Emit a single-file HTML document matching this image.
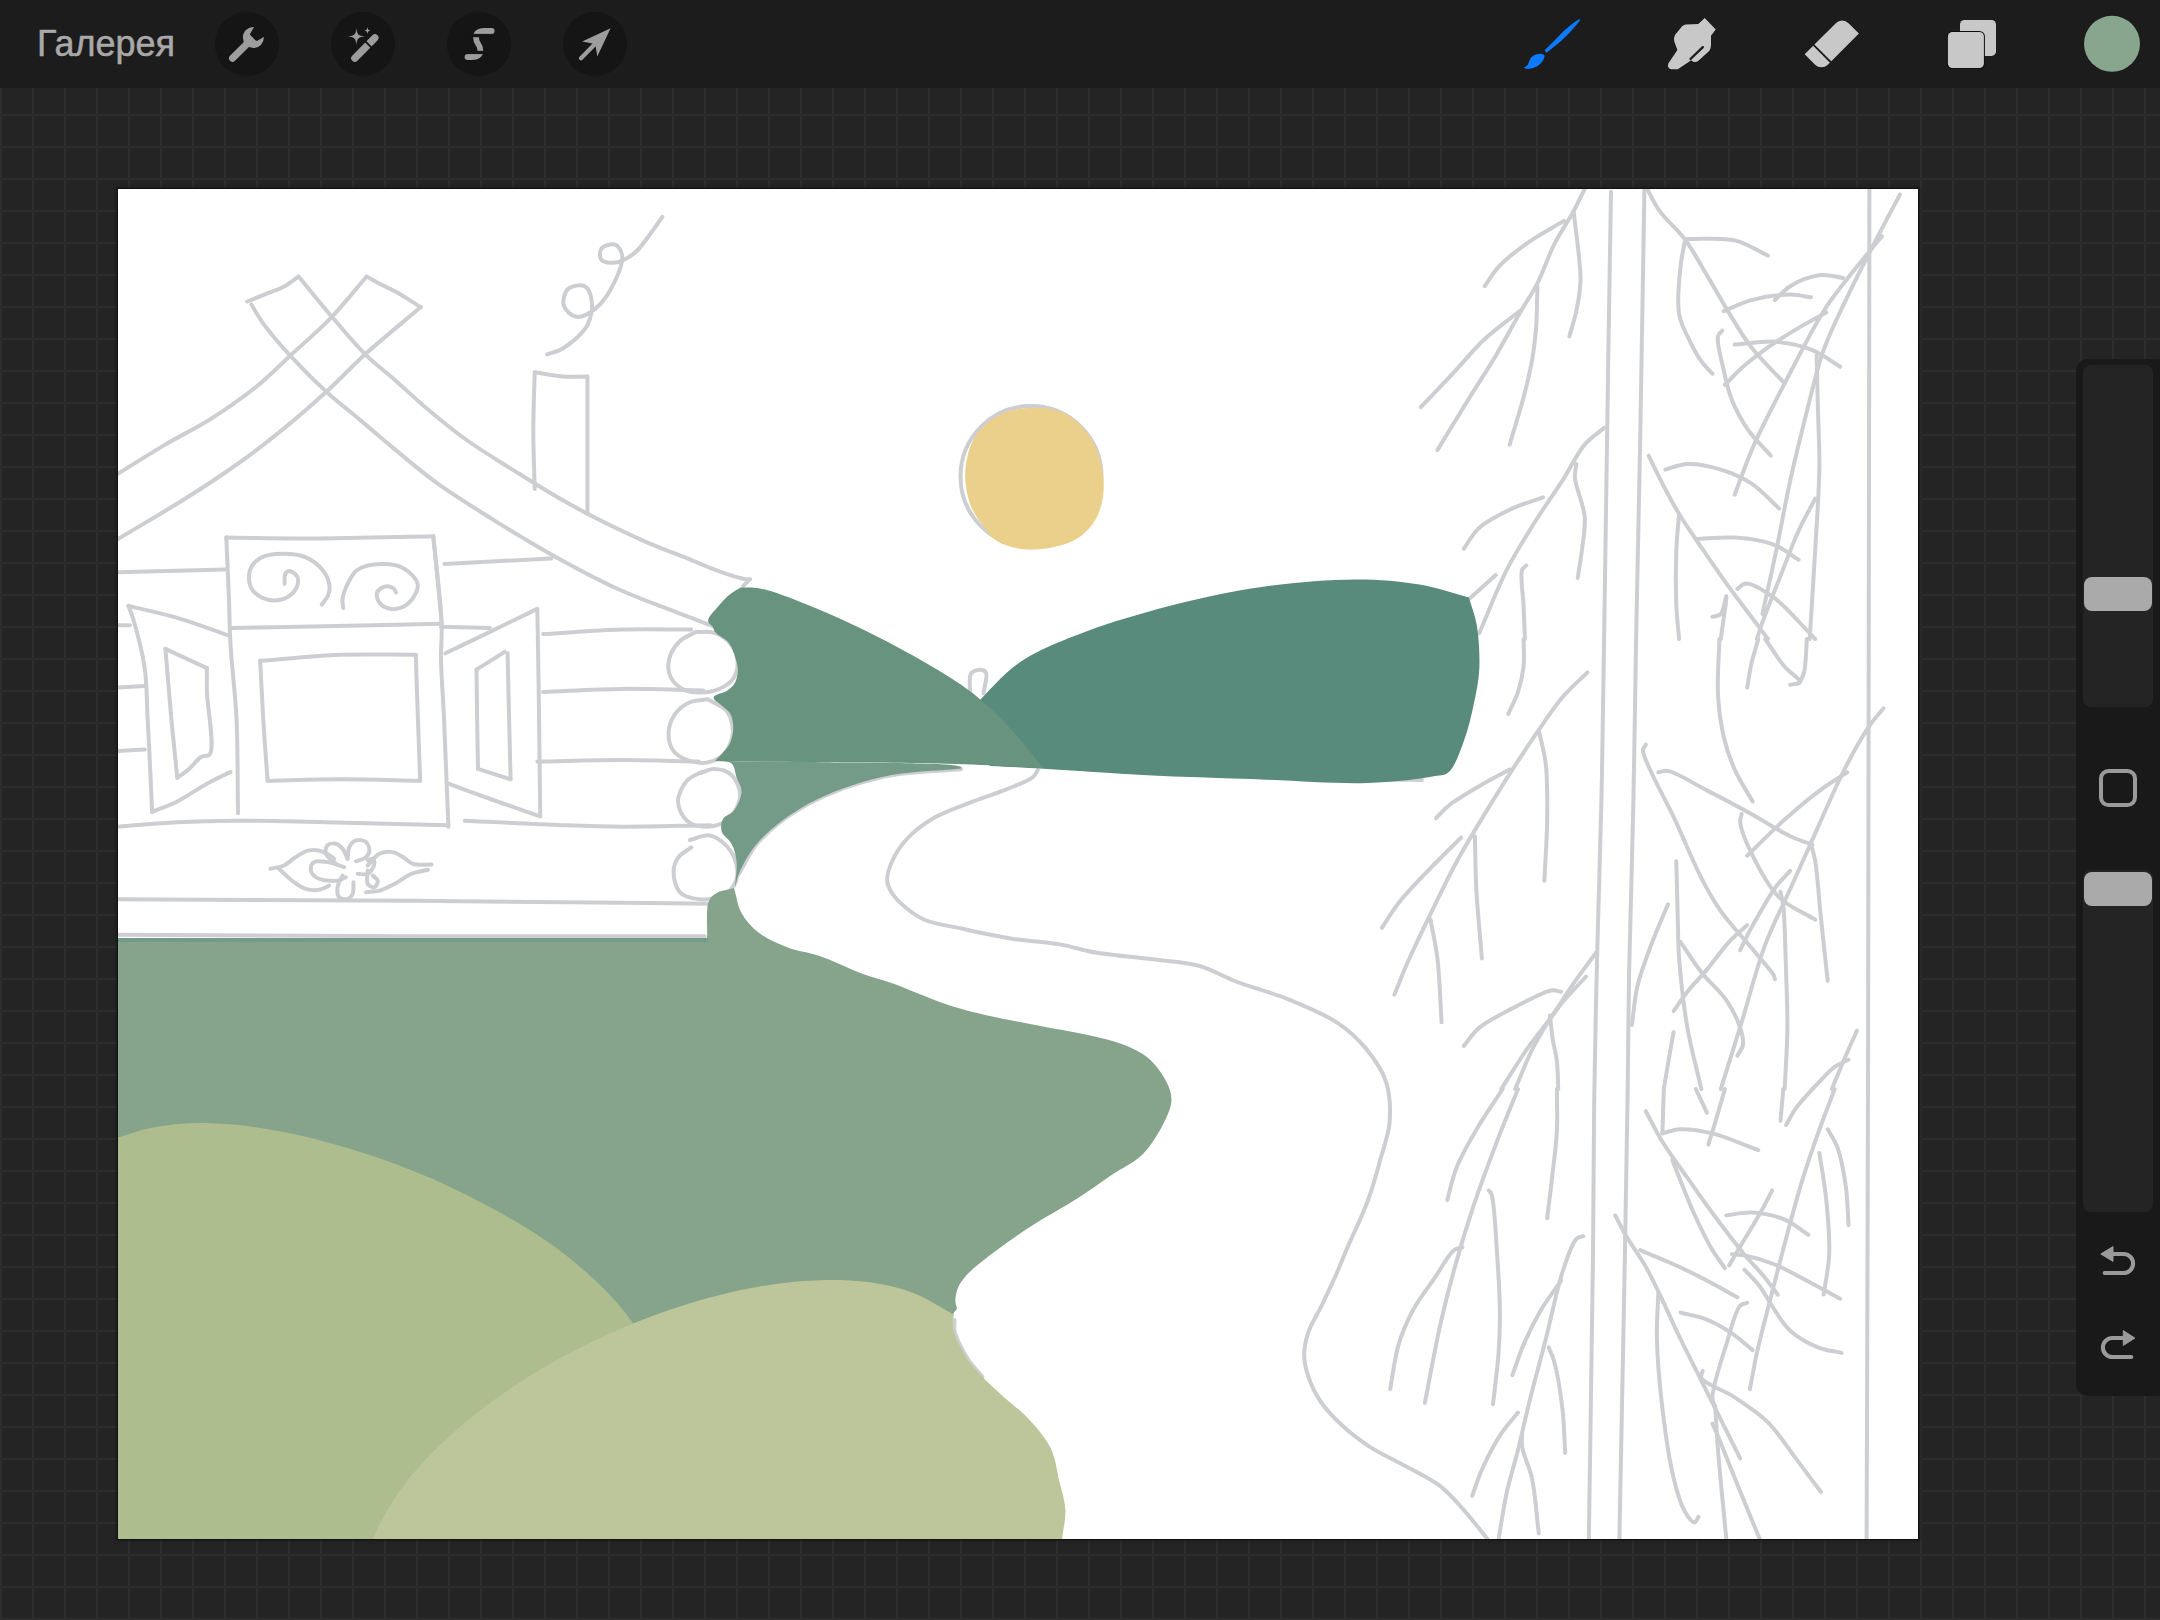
<!DOCTYPE html>
<html><head><meta charset="utf-8">
<style>
html,body{margin:0;padding:0;width:2160px;height:1620px;overflow:hidden;}
body{position:relative;background-color:#242424;
background-image:linear-gradient(to right,#2d2d2d 0,#2d2d2d 2px,transparent 2px),linear-gradient(to bottom,#2d2d2d 0,#2d2d2d 2px,transparent 2px);
background-size:32px 32px,32px 32px;background-position:0 0,0 18px;
font-family:"Liberation Sans",sans-serif;}
#top{position:absolute;left:0;top:0;width:2160px;height:88px;background:#1c1c1c;}
#gal{position:absolute;left:37px;top:23px;font-size:36px;color:#a9a9a9;letter-spacing:0px;-webkit-text-stroke:0.5px #a9a9a9;}
.cb{position:absolute;top:12px;width:64px;height:64px;border-radius:50%;background:#151515;}
#canvas{position:absolute;left:117px;top:188px;width:1802px;height:1352px;background:#121212;box-shadow:0 0 2px 1px rgba(20,20,20,0.6);}
#side{position:absolute;left:2076px;top:359px;width:100px;height:1037px;background:#191919;border-radius:12px;}
.track{position:absolute;left:7px;width:70px;background:#242424;border-radius:8px;}
.knob{position:absolute;left:8px;width:68px;height:34px;background:#aaaaaa;border-radius:8px;}
svg{position:absolute;left:0;top:0;}
</style></head><body>
<div id="top"></div>
<div id="gal">Галерея</div>
<div class="cb" style="left:215px"></div>
<div class="cb" style="left:331px"></div>
<div class="cb" style="left:447px"></div>
<div class="cb" style="left:563px"></div>
<div id="canvas"></div>
<div id="side">
  <div class="track" style="top:6px;height:342px"></div>
  <div class="knob" style="top:218px"></div>
  <div class="track" style="top:511px;height:342px"></div>
  <div class="knob" style="top:513px"></div>
</div>
<svg id="ui" width="2160" height="1620" viewBox="0 0 2160 1620">
<g fill="#9d9d9d">
 <g transform="translate(253.4,37.5) rotate(45)">
  <path d="M7,-7.8 A10.5,10.5 0 1 1 -7,-7.8 L-5.25,-1.5 Q-5.25,0.5 -3.25,0.5 L3.25,0.5 Q5.25,0.5 5.25,-1.5 Z"/>
  <line x1="0" y1="6" x2="0" y2="29.5" stroke="#9d9d9d" stroke-width="7.1" stroke-linecap="round"/>
 </g>
 <path d="M356.40,27.70 C356.92,34.49 358.31,35.88 365.10,36.40 C358.31,36.92 356.92,38.31 356.40,45.10 C355.88,38.31 354.49,36.92 347.70,36.40 C354.49,35.88 355.88,34.49 356.40,27.70 Z"/>
 <path d="M367.50,26.50 C367.75,29.70 368.40,30.35 371.60,30.60 C368.40,30.85 367.75,31.50 367.50,34.70 C367.25,31.50 366.60,30.85 363.40,30.60 C366.60,30.35 367.25,29.70 367.50,26.50 Z"/>
 <line x1="354.8" y1="58.3" x2="374.9" y2="37.9" stroke="#9d9d9d" stroke-width="7.2" stroke-linecap="round"/>
 <line x1="365" y1="41" x2="371.5" y2="47.6" stroke="#151515" stroke-width="1.8"/>
 <path d="M491.7,31 L484,31 C479.5,31 476,33 476,37 C476,45.5 480.4,42.5 480.4,51 C480.4,55 477,57 472,57 L467.5,57" fill="none" stroke="#9d9d9d" stroke-width="5.8" stroke-linecap="round"/>
 <rect x="462" y="33.9" width="30" height="3.3" fill="#151515"/>
 <rect x="462" y="50.8" width="30" height="3.3" fill="#151515"/>
 <path d="M610.6,28.3 L582.1,41.6 L592.5,43.4 L595.5,45.8 L597.3,56.4 Z"/>
 <line x1="581" y1="58.2" x2="594" y2="45" stroke="#9d9d9d" stroke-width="4.2" stroke-linecap="round"/>
</g>
<g fill="#0b7aff">
 <path d="M1579.8,19 C1574,22 1566,28 1557,38 C1552,43 1547,48 1544.6,50.3 L1546.6,52.7 C1550,50 1555,46 1560,42 C1568,35 1575,27 1580,20.5 Z"/>
 <path d="M1543.9,54.7 C1541,53 1537,53.5 1533,55.9 C1530.5,57.5 1529.5,60 1528.4,63.4 C1527.5,65.5 1526,66.5 1524.1,67.3 C1524.5,68.6 1526,69 1528,69 C1532.5,69 1537,67 1539.5,64.6 C1542.5,62 1544.5,58.5 1544.6,55.5 Z"/>
</g>
<g fill="#c8c8c8">
 <path d="M1704.7,18.1 L1715.7,29.4 L1711,35.7 L1711,44.4 Q1711,48.5 1709.4,50.7 L1698.7,60.6 Q1694.8,63.8 1691.2,60.2 L1677.8,69.3 L1671,69.3 Q1667,68 1668.3,63.5 L1677.4,49.9 L1674.2,41.2 Q1673.5,37.5 1675,35 L1682.1,26.2 Q1684,24.5 1686,24.4 L1698.3,23.9 Z"/>
 <line x1="1702.8" y1="47.2" x2="1690.5" y2="59" stroke="#1c1c1c" stroke-width="2.4" stroke-linecap="round"/>
 <g transform="translate(1831.8,43.95) rotate(-45)">
  <path d="M-26.5,-11.85 L17.5,-11.85 A9,9 0 0 1 26.5,-2.85 L26.5,11.85 L-17.5,11.85 A9,9 0 0 1 -26.5,2.85 Z"/>
  <rect x="-14.5" y="-13" width="1.8" height="26" fill="#1c1c1c"/>
 </g>
 <rect x="1960" y="19.9" width="36" height="36" rx="4.5"/>
 <rect x="1946.9" y="31" width="38" height="38" rx="5.5" fill="#0e0e0e"/>
 <rect x="1947.9" y="32" width="36" height="36" rx="4.5"/>
</g>
<circle cx="2112" cy="43.8" r="28" fill="#87a68d"/>
<g fill="#9a9a9a">
 <path d="M2100.8,1254 L2113,1246.6 L2113,1261.4 Z" stroke="#9a9a9a" stroke-width="1" stroke-linejoin="round"/>
 <path d="M2112,1254 L2123.6,1254 A9.5,9.5 0 0 1 2123.6,1273 L2104.7,1273" fill="none" stroke="#9a9a9a" stroke-width="4.1" stroke-linecap="round"/>
 <path d="M2134.9,1338.1 L2123.3,1330.6 L2123.3,1345.4 Z" stroke="#9a9a9a" stroke-width="1" stroke-linejoin="round"/>
 <path d="M2124.3,1338 L2112.4,1338 A9.5,9.5 0 0 0 2112.4,1357 L2131.3,1357" fill="none" stroke="#9a9a9a" stroke-width="4.1" stroke-linecap="round"/>
 <rect x="2101" y="771" width="34" height="34" rx="7.5" fill="none" stroke="#9a9a9a" stroke-width="4"/>
</g>
</svg>
<svg id="art" width="2160" height="1620" viewBox="0 0 2160 1620">
<rect x="118" y="189" width="1800" height="1350" fill="#fff"/>
<g clip-path="url(#cv)">
<g fill="none" stroke="#cdced2" stroke-width="4" stroke-linecap="round" stroke-linejoin="round">
<path d="M247.2,301.5 C254.1,298.7 261.5,295.8 268,293.2 C273.9,290.8 279.5,289.1 284.7,286.2 C289.7,283.5 293.9,279.7 298.6,276.5"/>
<path d="M251.3,304.3 C255,310.3 257.6,315.6 262.4,322.3 C269.4,332 280.1,344.6 290.2,355.7 C301.2,367.7 314.3,380.8 326.3,391.8 C337.4,401.9 348.4,410.1 359.7,419.6 C371.5,429.5 383.2,439.8 395.8,450.1 C409.1,461.1 422.3,472.5 437.4,483.4 C454.4,495.7 474.4,507.9 493,519.6 C511.4,531.1 528.8,541.9 548.6,552.9 C570.2,565 595.9,578.9 618,589 C637.3,597.9 656,604.4 673.6,611.2 C689.2,617.3 703.2,622.3 718,627.9"/>
<path d="M298.6,276.5 C309.7,289.9 320.7,303.7 331.9,316.8 C342.9,329.6 354,343.2 365.2,354.3 C375.3,364.2 385.9,371.9 395.8,380.7 C405.3,389.1 413.2,396.9 423.6,405.7 C435.9,416.1 450.6,428.5 465.2,439 C480.2,449.8 496.4,459.5 512.4,469.6 C528.8,479.8 546.4,490.9 562.4,500.1 C576.8,508.3 590.1,515.3 604.1,522.3 C617.9,529.2 631.8,535.7 645.8,541.8 C659.6,547.8 674.6,553.3 687.4,558.4 C698.4,562.9 708,567.4 718,570.9 C727.4,574.3 740.6,578.5 745.8,579.3 C747.7,579.6 748.6,579.3 749.9,579.3"/>
<path d="M366.6,276.5 C355,289.9 344.4,303.8 331.9,316.8 C319,330.2 303.4,343.5 290.2,355.7 C278.5,366.5 269.3,376.2 256.9,386.2 C242.8,397.5 225.4,409.6 209.7,419.6 C194.9,428.9 180.2,435.7 165.2,444.6 C149.6,453.8 133.7,464 118,473.7"/>
<path d="M366.6,276.5 C370.8,278.8 374.6,281.1 379.1,283.4 C384.2,286.2 389.7,288.4 395.8,291.8 C403.4,296 412.4,302 420.8,307.1"/>
<path d="M420.8,307.1 C402.3,322.8 381.9,339.2 365.2,354.3 C350.9,367.3 339.7,379.6 326.3,391.8 C312.8,404.1 299.2,416.1 284.7,427.9 C269.6,440.2 253.6,452.5 237.4,464 C221.2,475.6 205.6,485.8 187.4,497.3 C166.3,510.7 141.1,525.1 118,539"/>
<path d="M534.7,489 C534.2,469.6 533.3,450.1 533.3,430.7 C533.3,411.2 534.2,391.8 534.7,372.3"/>
<path d="M534.7,372.3 C543.9,373.7 553.4,375.8 562.4,376.5 C571,377.1 579.1,376.5 587.4,376.5"/>
<path d="M587.4,376.5 C587.4,397.3 587.4,417.2 587.4,439 C587.4,462.9 587.4,489 587.4,514"/>
<path d="M547.2,354.3 C552.3,352.4 557.1,352 562.4,348.7 C570.2,343.9 582.7,334 587.4,325.1 C591.5,317.5 592.7,307.1 591.6,300.1 C590.8,294.7 588.5,288.2 584.7,286.2 C580.7,284.2 571.5,285.8 568,289 C564.5,292.2 562.4,301 563.8,305.7 C565.3,310.3 571.4,316 576.3,316.8 C581.9,317.7 589.9,313.2 595.8,308.4 C603.2,302.4 610.8,290.1 615.2,280.7 C619.1,272.4 623.1,262.2 622.2,255.7 C621.5,251 618.6,245.8 615.2,244.6 C611.7,243.2 603.5,245.8 601.3,248.7 C599.4,251.3 599.4,257.5 601.3,259.8 C603.5,262.5 610.3,263.3 615.2,262.6 C621.3,261.8 629.1,257.3 634.7,252.9 C640.2,248.5 644,242.1 648.6,236.2 C653.3,230.1 657.8,223.3 662.4,216.8"/>
<path d="M226.3,537.6 C255,537.9 281.3,538.6 312.4,538.4 C349.3,538.3 393,537 433.3,536.2"/>
<path d="M433.3,536.2 C434.7,550.1 436.1,563.8 437.4,577.9 C438.9,592.5 440.2,607.5 441.6,622.3"/>
<path d="M118,572.3 L224.9,569.6"/>
<path d="M444.4,564 L551.3,558.4"/>
<path d="M284.6,583.9 C284.8,580.5 284.1,575.7 285.4,573.6 C286.4,572.1 288.1,570.9 289.7,571 C292,571.1 296.3,574.4 297.5,577 C298.7,579.8 298,584.2 296.7,587.4 C295.1,590.9 291.5,594.7 288,596.9 C284.6,599 280.1,600.2 275.9,600.4 C271.5,600.6 266.2,599.8 262.1,597.8 C257.8,595.6 252.9,591.8 250.9,587.4 C248.7,582.7 248.3,575.1 250,570.1 C251.6,565.4 255.6,560.8 260.4,558 C266,554.7 275.3,553.8 282.8,553.7 C290.3,553.6 298.6,554.3 305.3,557.2 C311.8,559.9 318.5,565 322.6,570.1 C326.2,574.7 328.9,580.9 329.5,585.7 C330,589.4 329.1,592.9 327.8,596 C326.5,599.2 323.7,601.8 321.7,604.7"/>
<path d="M343.3,608.1 C343,605.3 342.1,602.8 342.5,599.5 C343,594.7 345.9,587.3 348.5,582.2 C350.9,577.6 352.8,573.1 357.1,570.1 C362.8,566.3 373.4,564.3 381.3,564.1 C388.9,563.9 397.7,564.9 403.8,568.4 C409.7,571.7 416.5,578.8 417.6,583.9 C418.6,588 416.3,592.4 414.2,596 C411.9,600 407.8,604.3 403.8,606.4 C400.2,608.4 395.7,609.5 391.7,609 C387.6,608.5 382,606 379.6,603 C377.5,600.3 376.1,595.4 377,592.6 C377.9,589.9 382,587.2 384.8,586.5 C387.5,585.9 391.6,586.9 393.4,588.3 C394.9,589.3 395.2,591.1 396,592.6"/>
<path d="M226.3,537.6 C227.2,558.4 228.3,581 229,600 C229.6,616.1 229.5,627.7 230.5,644.4 C231.7,666 235.2,692.3 236.5,718.5 C237.9,748.1 237.5,781.7 238,813.3"/>
<path d="M433.3,536.2 C436.1,564.9 440.7,599.6 441.6,622.3 C442.2,637.2 440.8,645.5 441,659.3 C441.3,676.7 443,695.8 444,718.5 C445.4,749.2 446.9,790.6 448.4,826.7"/>
<path d="M231.9,627.9 C258.7,627.4 282.5,627.1 312.4,626.5 C350.1,625.8 397.6,624.6 440.2,623.7"/>
<path d="M128.4,605.9 C129.9,609.9 131.2,612.4 132.8,617.8 C136.1,628.7 142.2,651.3 144.7,668.1 C147.1,684.8 146.7,701 147.6,718.5 C148.7,737.5 149.8,760.7 150.6,777.8 C151.2,790.7 151.6,800.5 152.1,811.9"/>
<path d="M128.4,605.9 C144.7,609.9 160.8,613 177.3,617.8 C194.4,622.8 211.8,629.6 229.1,635.6"/>
<path d="M152.1,811.9 C160.5,808.4 168.7,805.8 177.3,801.5 C186.9,796.6 197.5,788.9 206.9,783.7 C215.1,779.2 222.7,775.8 230.6,771.9"/>
<path d="M165.4,648.9 L206.9,668.1"/>
<path d="M206.9,668.1 C206.9,676 206.7,682.1 206.9,691.9 C207.3,707.7 215.1,746.4 209.9,754.1 C207.8,757 203.9,755.2 201,757 C197,759.5 193.2,765.4 189.1,768.9 C185.3,772.2 181.2,774.8 177.3,777.8"/>
<path d="M177.3,777.8 C175.3,758 173.2,739.1 171.3,718.5 C169.3,696.3 167.4,672.1 165.4,648.9"/>
<path d="M118,826.7 C137.8,825.2 157.5,823.2 177.3,822.2 C197,821.2 214.8,820.8 236.5,820.7 C263.2,820.6 293.4,821.6 325.4,822.2 C363.1,823 407.4,824.2 448.4,825.2"/>
<path d="M260.2,660.7 C286.9,658.8 313.9,655.8 340.2,654.8 C365.7,653.9 390.6,654.8 415.8,654.8"/>
<path d="M415.8,654.8 C416.5,676 417.1,697.4 417.9,718.5 C418.6,739.4 419.4,760 420.2,780.7"/>
<path d="M420.2,780.7 C393.6,780.2 366.2,779.2 340.2,779.3 C315.4,779.3 291.8,780.2 267.6,780.7"/>
<path d="M267.6,780.7 C266.1,760 264.4,738.9 263.2,718.5 C262,698.9 261.2,680 260.2,660.7"/>
<path d="M445.4,653.3 C459.7,646.4 473.6,639.7 488.4,632.6 C504.1,625 521,616.8 537.3,608.9"/>
<path d="M537.3,608.9 C537.8,635.6 538.3,659.1 538.7,688.9 C539.3,726.4 539.7,773.8 540.2,816.3"/>
<path d="M540.2,816.3 C525.9,811.4 512,806.7 497.3,801.5 C481.5,795.9 464.7,789.6 448.4,783.7"/>
<path d="M476.5,669.6 L504.7,651.9"/>
<path d="M507.6,653.3 C508.1,675.1 508.6,697.2 509.1,718.5 C509.6,739.1 510.1,759 510.6,779.3"/>
<path d="M510.6,779.3 L478,768.9"/>
<path d="M478,768.9 C477.7,752.1 477.4,735.2 477.1,718.5 C476.9,702.1 476.7,685.9 476.5,669.6"/>
<path d="M441,626.7 L489.9,628.1"/>
<path d="M543.2,634.1 C569.4,632.6 596.3,630.3 621.7,629.6 C645.6,629 668.1,629.6 691.3,629.6"/>
<path d="M543.2,691.9 C569.4,690.9 595.3,689.1 621.7,688.9 C648.6,688.6 676,689.9 703.2,690.4"/>
<path d="M537.3,761.5 C565.4,761 594.2,760 621.7,760 C648,760 673.1,761 698.7,761.5"/>
<path d="M464.7,820.7 C497.3,822.2 533.9,824.2 562.4,825.2 C584.7,826 600,826.6 621.7,826.7 C648.3,826.8 681,825.7 710.6,825.2"/>
<path d="M118,625.2 L129.9,625.2"/>
<path d="M118,687.4 L144.7,685.9"/>
<path d="M118,751.1 L144.7,749.6"/>
<path d="M118,899.3 C216.8,899.8 315.8,900 414.3,900.7 C512.3,901.5 609.9,902.7 707.6,903.7"/>
<path d="M118,934.8 C216.8,935.3 316,936.1 414.3,936.3 C511.6,936.5 607.9,936.3 704.7,936.3"/>
<path d="M695.8,632 C690.3,635.2 683.9,637.1 679.5,641.5 C674.9,646.1 670.5,653.1 669.1,659.3 C667.8,665 668.3,672.1 670.6,677 C672.8,681.9 677.7,686.3 682.4,688.9 C687.1,691.5 693,692.3 698.7,692.4 C705.2,692.6 713.4,691.6 719.5,688.9 C725.2,686.3 731.3,682.1 734.3,677 C737.2,672.1 738.1,665 737.3,659.3 C736.3,653.2 732.5,646 728.4,641.5 C724.5,637.3 718.9,634.2 713.6,632.6 C708.1,631 701.7,632.2 695.8,632"/>
<path d="M707.6,699.3 C701.7,700.2 695.2,699.8 689.9,702.2 C684.3,704.7 678.6,709 675,714.1 C671.4,719.3 668.7,727 668.5,733.3 C668.4,739.4 670.1,746.5 673.6,751.1 C677.1,755.8 684.1,759 689.9,760.9 C695.5,762.7 702,763.5 707.6,762.4 C713.3,761.2 719.8,758.5 723.9,754.1 C728.5,749.2 732.3,740.5 732.8,733.3 C733.3,726.1 731.1,716.8 726.9,711.1 C722.7,705.5 714,703.2 707.6,699.3"/>
<path d="M701.7,771.9 C696.8,774.8 690.7,776.3 686.9,780.7 C682.5,785.8 677.9,794.7 678,801.5 C678.1,808 682,816.5 686.9,820.7 C691.8,825 700.8,826.9 707.6,826.7 C714.6,826.4 723,824 728.4,819.3 C734.2,814.1 740,803.2 740.2,795.6 C740.4,788.5 736.1,779.2 731.3,774.8 C726.9,770.8 719.1,768.9 713.6,768.9 C708.8,768.9 704.7,771.9 700.2,773.3"/>
<path d="M691.3,847.4 C686.9,850.9 681,853.5 678,857.8 C675.2,861.9 673.4,867.3 673.6,872.6 C673.7,879 675.9,888.9 681,893.3 C686.6,898.3 699.4,899.8 707.6,899.3 C715,898.8 723.4,896.1 728.4,891.9 C733,887.9 736.5,881.7 737.3,875.6 C738.2,868.5 735.6,858.4 731.3,851.9 C726.9,845 717.9,837.3 710.6,835.6 C704,834 696.8,838.5 689.9,840"/>
<path d="M270.5,868.8 C275,867.7 279.8,867.4 283.9,865.5 C288.2,863.5 291.5,859.6 295.6,857.1 C299.9,854.5 304.3,851.2 309.1,850.4 C313.8,849.5 319.8,850.5 324.1,852.1 C328,853.5 330.8,856.5 334.2,858.8"/>
<path d="M278.9,868.8 C283.9,873.3 289.1,878.7 294,882.2 C298,885.1 301.5,887.7 305.7,888.9 C309.9,890.2 315,890.5 319.1,889.8 C322.8,889.2 325.8,887 329.2,885.6"/>
<path d="M344.2,867.1 C338.7,865.5 332.8,862.9 327.5,862.1 C322.8,861.4 316.8,860.4 314.1,862.1 C312,863.4 310.6,866.5 310.7,868.8 C310.8,871.5 313.2,875.3 315.8,877.2 C318.6,879.4 323.7,880 327.5,880.6 C330.9,881 334.4,881.2 337.5,880.6 C340.5,880 343.1,878.3 345.9,877.2"/>
<path d="M335.9,863.8 C332.5,860.4 326.9,857.2 325.8,853.7 C325,851 325.8,847 327.5,845.4 C329.2,843.7 333.3,843.1 335.9,843.7 C338.4,844.3 340.7,846.5 342.6,848.7 C344.7,851.3 345.9,855.4 347.6,858.8"/>
<path d="M347.6,858.8 C348.2,854.9 347.7,850.2 349.3,847 C350.7,844.2 353.3,841.2 356,840.3 C358.8,839.4 363.8,840.2 366,842 C368.1,843.7 369.5,847.8 369.4,850.4 C369.3,852.8 367.9,855.3 366,857.1 C363.8,859.2 359.3,859.9 356,861.3"/>
<path d="M357.7,873.8 C361,873.8 365,875.3 367.7,873.8 C370.7,872.3 374,866.7 374.4,863.8 C374.7,861.9 373.9,859.3 372.7,858.8 C371.6,858.2 369.4,859.9 367.7,860.4"/>
<path d="M367.7,870.5 C367.7,875 366,881.1 367.7,883.9 C369,886 372.7,887.8 374.4,887.3 C376.1,886.7 378.1,882.5 377.8,880.6 C377.4,878.6 374.4,877.2 372.7,875.5"/>
<path d="M342.6,875.5 C340.9,879.4 338,883.4 337.5,887.3 C337.1,890.7 337.4,895.4 339.2,897.3 C340.9,899.1 345.3,899.7 347.6,899 C349.7,898.4 351.6,896.2 352.6,894 C354,891 353.2,886.1 353.5,882.2"/>
<path d="M367.7,865.5 C371.6,861.6 375,855.9 379.4,853.7 C383.5,851.8 388.8,851.4 392.8,852.1 C396.5,852.7 399.6,855.2 402.9,857.1 C406.3,859.1 408.9,862.5 413,863.8 C418,865.4 425.2,864.4 431.4,864.6"/>
<path d="M428,869.7 C422.5,871.1 416.7,871.6 411.3,873.8 C405.5,876.2 400,881 394.5,883.9 C389.4,886.5 384.4,889.2 379.4,890.6 C374.9,891.9 370.5,891.7 366,892.3"/>
<path d="M749.9,579.3 L743,586.2"/>
<path d="M969.9,693.3 C970.3,686.7 968.5,677.3 971,673.6 C972.6,671.2 976,670.1 978.5,669.9 C980.9,669.7 984.5,670.2 985.9,672.3 C988.1,675.8 984.3,686.3 983.5,693.3"/>
<path d="M1350,779 L1422,780"/>
<path d="M954.5,1320 C954.5,1323.7 953.8,1327.2 954.5,1331 C955.3,1335.2 957.4,1339.5 959.5,1344 C961.9,1349.1 964.9,1354.7 968.5,1360 C972.4,1365.8 977.8,1371.3 982.5,1377"/>
<path d="M1037.8,769.9 C1036.1,772.4 1035.6,774.9 1032.8,777.3 C1027.6,781.7 1015.5,785.6 1005.7,789.6 C994.4,794.2 980.9,798.3 968.6,803.2 C956.2,808.2 942.3,812.8 931.6,819.3 C922.1,825 913.6,831.7 906.9,839 C900.7,845.7 895.4,853.7 892.1,861.2 C889.2,867.7 886.8,875.2 887.2,881 C887.5,885.6 889.6,889.3 892.1,893.3 C895.1,898 899.9,902.8 905,907 C910.7,911.8 917,916.6 925,920 C935,924.3 948.2,925.6 961.5,928.5 C977.2,931.9 996.4,936.2 1013.3,938.9 C1029.2,941.4 1045.4,941.9 1060,944.4 C1073.1,946.7 1083.3,950.5 1097,952.8 C1113.6,955.6 1134.9,957 1152.6,959.3 C1168.8,961.4 1184.6,961.7 1198.9,965.7 C1212.2,969.4 1222.4,976.3 1235.9,981.5 C1251.6,987.5 1270.9,992.2 1287.8,999.1 C1304.8,1006 1324.1,1013.9 1337.8,1023.1 C1349.1,1030.6 1357.6,1038.5 1365.6,1048.1 C1373.7,1057.9 1381.9,1069.3 1385.9,1081.5 C1390,1094 1390.6,1109 1389.6,1122.2 C1388.6,1134.9 1383.9,1146.7 1380.4,1159.3 C1376.7,1172.6 1373.3,1186 1368.1,1200 C1362.3,1215.7 1352.7,1235.3 1346.8,1249 C1342.6,1258.9 1340.1,1265.6 1336.1,1274.6 C1331.6,1284.7 1326,1296.5 1321.2,1306.5 C1316.8,1315.5 1311.2,1323.6 1308.4,1332.1 C1305.8,1339.9 1304.1,1347.9 1304.2,1355.5 C1304.3,1362.8 1305.9,1369.5 1308.4,1376.8 C1311.2,1385.1 1315.7,1394.4 1321.2,1402.4 C1327,1410.8 1334.6,1418.5 1342.5,1425.8 C1350.8,1433.5 1360,1440.5 1370.2,1447.1 C1381.3,1454.3 1395,1460.2 1406.9,1466.8 C1418.3,1473.2 1430.6,1478.8 1440.2,1486.2 C1448.8,1492.9 1455,1500.2 1462.4,1508.4 C1470.7,1517.6 1479.1,1528.8 1487.4,1539"/>
<path d="M961,769 C934.7,771.7 907.5,771.1 882,777 C856.6,782.8 829.4,792.3 808,804 C789,814.4 770.7,828.3 758.8,841.5 C749.5,851.8 745.6,862.9 739,873.6"/>
<path d="M1611,191.8 C1610.1,246.4 1609.3,293.6 1608.3,355.7 C1607,437.3 1605.4,557 1604.1,639 C1603.1,701.9 1602.5,751.9 1601.3,805.7 C1600.2,856.3 1598.4,904.8 1597.2,952.9 C1596.1,999.2 1595.1,1041.3 1594.4,1089 C1593.6,1141.7 1593.7,1192.8 1593,1255.7 C1592,1337.7 1590.2,1444.6 1588.8,1539"/>
<path d="M1644.4,189 C1643,272.3 1641.7,360.3 1640.2,439 C1638.9,509.4 1637.3,575.4 1636.1,639 C1635,697.1 1634.5,750.1 1633.3,805.7 C1632.1,861.2 1630,921.7 1629.1,972.3 C1628.3,1014.7 1628.3,1046.6 1627.7,1089 C1627,1139.6 1626,1192.8 1624.9,1255.7 C1623.4,1337.7 1621.2,1444.6 1619.4,1539"/>
<path d="M1869.4,189 C1868.9,489 1868.6,840.5 1868,1089 C1867.6,1264.7 1867.1,1389 1866.6,1539"/>
<path d="M1584.7,189 C1581,196.4 1577.9,203.1 1573.6,211.2 C1568.1,221.3 1560,232.8 1554.1,244.6 C1547.9,256.8 1543.4,271.8 1537.4,283.4 C1532.2,293.7 1526.8,300.8 1520.8,311.2 C1513.2,324.3 1504.5,341 1495.8,355.7 C1486.9,370.6 1477.4,384.8 1468,400.1 C1458,416.3 1447.6,433.4 1437.4,450.1"/>
<path d="M1563.8,220.9 C1552.3,227.9 1540.1,234.1 1529.1,241.8 C1518.3,249.4 1506.4,258.4 1498.6,266.8 C1492.5,273.3 1489.3,279.7 1484.7,286.2"/>
<path d="M1573.6,211.2 C1575.4,227 1578,245.6 1579.1,258.4 C1579.9,267.2 1580.8,272.7 1580.5,280.7 C1580.2,290.1 1578.3,301.6 1576.3,311.2 C1574.5,320 1571.7,327.9 1569.4,336.2"/>
<path d="M1519.4,311.2 C1507.8,320.5 1495.8,328.7 1484.7,339 C1473,349.9 1462.3,363.5 1451.3,375.1 C1441,386.1 1431,396.4 1420.8,407.1"/>
<path d="M1537.4,286.2 C1537,300.1 1537.1,314.8 1536.1,327.9 C1535.1,339.6 1533.9,349.9 1531.9,361.2 C1529.8,373.1 1526.9,384.5 1523.6,397.3 C1519.7,412.1 1514.3,428.8 1509.7,444.6"/>
<path d="M1899.9,194.6 C1891.1,211.2 1882.4,227.4 1873.6,244.6 C1864.3,262.5 1854.3,282 1845.8,300.1 C1837.7,317.1 1829.9,332.4 1823.6,350.1 C1816.7,369.2 1812.3,390.2 1806.9,411.2 C1801.2,433.6 1795.3,457.5 1790.2,480.7 C1785.1,503.8 1781.1,527.5 1776.3,550.1 C1771.8,571.9 1767.1,592.7 1762.4,614"/>
<path d="M1881.9,236.2 C1869.9,251 1856.2,267.1 1845.8,280.7 C1837.3,291.7 1831.5,298.5 1823.6,311.2 C1811.8,329.9 1796.7,360.3 1784.7,383.4 C1773.7,404.6 1762.8,425 1754.1,444.6 C1746.4,461.9 1741.1,477.9 1734.7,494.6"/>
<path d="M1647.2,189 C1651.3,196.4 1654.3,203.7 1659.7,211.2 C1666.2,220.3 1677,228.8 1684.7,239 C1692.8,249.9 1699.8,263.3 1706.9,275.1 C1713.7,286.4 1719.3,297 1726.3,308.4 C1734,321 1741.8,335 1751.3,347.3 C1761.2,360 1773.6,371.4 1784.7,383.4"/>
<path d="M1684.7,239 C1701.3,239.5 1720,237 1734.7,240.4 C1747.2,243.3 1756.9,250.6 1768,255.7"/>
<path d="M1684.7,241.8 C1683.3,250.1 1681.4,257.1 1680.5,266.8 C1679.2,280 1676.7,300.5 1679.1,314 C1681,324.7 1686.2,333.5 1690.2,341.8 C1693.7,349 1697.3,355.6 1701.3,361.2 C1704.8,366.1 1708.7,369.6 1712.4,373.7"/>
<path d="M1723.6,311.2 C1732.8,307.5 1741.1,302.8 1751.3,300.1 C1763,297 1779.3,294.6 1790.2,294.6 C1798.2,294.5 1804.1,296.4 1811.1,297.3"/>
<path d="M1774.9,300.1 C1780,295.5 1783.8,290.1 1790.2,286.2 C1798.3,281.3 1811.3,276.2 1820.8,275.1 C1828.7,274.2 1835.6,277 1843,277.9"/>
<path d="M1826.3,312.6 C1817.1,317.7 1807.9,322.3 1798.6,327.9 C1788.5,333.8 1777.5,340.6 1768,347.3 C1759.1,353.6 1750.5,360.2 1743,366.8 C1736.3,372.7 1731,378.8 1724.9,384.8"/>
<path d="M1734.7,344.6 C1748.6,343.6 1763,340.7 1776.3,341.8 C1788.9,342.8 1801.5,345.7 1812.4,350.1 C1822.7,354.2 1831,361.2 1840.2,366.8"/>
<path d="M1722.2,330.7 C1720.8,332.5 1718.7,333.4 1718,336.2 C1716.5,342.5 1721.2,358.7 1723.6,369.6 C1725.8,380 1727.9,390.2 1731.9,400.1 C1736.1,410.5 1742,421.3 1748.6,430.7 C1755,439.8 1763.4,447.3 1770.8,455.7"/>
<path d="M1816.6,355.7 C1817.1,374.2 1817.5,392.7 1818,411.2 C1818.5,429.7 1819.6,446.4 1819.4,466.8 C1819.1,491.8 1816.8,521.9 1815.2,550.1 C1813.6,579.3 1811.5,609.4 1809.7,639"/>
<path d="M1648.6,455.7 C1654.1,466.8 1659.8,478.7 1665.2,489 C1670,498 1673.7,505.2 1679.1,514 C1685.5,524.4 1693.7,536 1701.3,547.3 C1709.4,559.2 1717.9,571.7 1726.3,583.4 C1734.6,594.9 1743.8,606.8 1751.3,616.8 C1757.5,624.9 1762.4,631.6 1768,639"/>
<path d="M1665.2,469.6 C1672.6,467.7 1679.3,464.3 1687.4,464 C1697.4,463.6 1710.1,466.3 1720.8,469.6 C1731.4,472.8 1741.8,477.2 1751.3,483.4 C1761.4,490 1769.9,500.1 1779.1,508.4"/>
<path d="M1679.1,514 C1678.2,526 1676.8,536.8 1676.3,550.1 C1675.7,566.6 1675.7,589.5 1676.3,605.7 C1676.9,618.2 1678.2,627.9 1679.1,639"/>
<path d="M1695.8,539 C1708.7,538.5 1721.8,536.7 1734.7,537.6 C1747.7,538.5 1762.4,540.3 1773.6,544.6 C1783.2,548.2 1790.2,554.7 1798.6,559.8"/>
<path d="M1815.2,498.7 C1809.7,509.4 1803.8,519.2 1798.6,530.7 C1792.7,543.5 1787.6,557.8 1781.9,572.3 C1775.6,588.2 1766.9,610.1 1762.4,622.3 C1759.9,629.3 1758.7,633.4 1756.9,639"/>
<path d="M1712.4,616.8 C1715.2,615.9 1718.6,616.2 1720.8,614 C1724,610.8 1725.7,595.8 1726.3,595.9 C1727.3,596.2 1722.6,624.6 1720.8,639"/>
<path d="M1737.4,589 C1740.2,587.1 1742.1,583.7 1745.8,583.4 C1752.3,583 1763.9,590.4 1773.6,597.3 C1786.8,606.9 1801.3,625.1 1815.2,639"/>
<path d="M1604.1,427.9 C1597.6,433.4 1590.8,437.3 1584.7,444.6 C1576.7,453.8 1570.4,468.3 1562.4,480.7 C1553.8,494.1 1543.7,507.9 1534.7,522.3 C1525.2,537.5 1515.7,552.3 1506.9,569.6 C1497,589 1488.4,612.1 1479.1,633.4"/>
<path d="M1543,497.3 C1532.8,501 1522.6,503.7 1512.4,508.4 C1501.3,513.7 1487.5,520.3 1479.1,527.9 C1472.2,534.1 1468.9,541.8 1463.8,548.7"/>
<path d="M1576.3,464 C1575.9,468.6 1574.5,472.1 1574.9,477.9 C1575.7,487.6 1583.6,504.2 1584.7,516.8 C1585.6,528.2 1583.1,539.5 1581.9,550.1 C1580.8,559.8 1579.1,568.6 1577.7,577.9"/>
<path d="M1526.3,565.4 C1524.9,566.8 1523.1,567.2 1522.2,569.6 C1519.8,575.5 1523.1,593.9 1523.6,605.7 C1524,617 1524.5,627.9 1524.9,639"/>
<path d="M1495.8,575.1 L1469.4,598.7"/>
<path d="M1587.4,672.3 C1579.1,680.7 1570.2,688.3 1562.4,697.3 C1554.4,706.7 1547.9,716.8 1540.2,727.9 C1531.4,740.6 1521.6,755.4 1512.4,769.6 C1503.1,784.1 1493.8,798.9 1484.7,814 C1475.3,829.4 1465.9,844.7 1456.9,861.2 C1447.3,878.8 1437.8,899 1429.1,916.8 C1421.2,933.1 1413.1,949.9 1406.9,964 C1402,975.2 1398.6,984.4 1394.4,994.6"/>
<path d="M1538.8,730.7 C1541.1,741.8 1544.3,751.4 1545.8,764 C1547.6,780.1 1547.4,800.6 1547.2,819.6 C1547,839.4 1545.3,860.3 1544.4,880.7"/>
<path d="M1509.7,769.6 C1499.5,775.1 1489.2,780.3 1479.1,786.2 C1468.8,792.3 1456.3,799.5 1448.6,805.7 C1443.2,810 1440.2,814 1436.1,818.2"/>
<path d="M1474.9,836.2 C1475.4,853.8 1475.3,870.2 1476.3,889 C1477.5,910.6 1480,935.3 1481.9,958.4"/>
<path d="M1461.1,837.6 C1450.4,848.3 1439.5,858.7 1429.1,869.6 C1418.7,880.4 1406.9,892.3 1398.6,902.9 C1391.8,911.5 1387.4,919.6 1381.9,927.9"/>
<path d="M1430.5,919.6 C1432.8,932.5 1435.7,943.8 1437.4,958.4 C1439.7,977.1 1440.2,1001 1441.6,1022.3"/>
<path d="M1523.6,639 C1523.6,648.3 1524.5,657.8 1523.6,666.8 C1522.6,675.4 1520.6,683.8 1518,691.8 C1515.5,699.5 1511.5,706.6 1508.3,714"/>
<path d="M1595.8,952.9 C1588.4,963.1 1580.9,973 1573.6,983.4 C1566,994.2 1559.1,1005.8 1551.3,1016.8 C1543.4,1028 1534.5,1038.4 1526.3,1050.1 C1517.8,1062.4 1509.7,1076 1501.3,1089"/>
<path d="M1586.1,976.5 C1577.3,986.2 1567.9,994.9 1559.7,1005.7 C1550.7,1017.4 1542,1030.9 1534.7,1044.6 C1527.1,1058.6 1521.7,1074.2 1515.2,1089"/>
<path d="M1561.1,991.8 C1557.8,991.3 1555.5,989.8 1551.3,990.4 C1542.6,991.7 1524.8,1002 1512.4,1008.4 C1500.8,1014.6 1487.6,1020.7 1479.1,1027.9 C1472.4,1033.5 1468.9,1039.9 1463.8,1045.9"/>
<path d="M1549.9,1015.4 C1550.9,1023.3 1551.5,1031.3 1552.7,1039 C1553.9,1046.5 1556,1053.4 1556.9,1061.2 C1557.9,1069.9 1557.8,1079.7 1558.3,1089"/>
<path d="M1719.4,639 C1718.9,657.5 1717.1,677.4 1718,694.6 C1718.8,709.5 1720.6,723.2 1723.6,736.2 C1726.3,748.1 1729.9,758.8 1734.7,769.6 C1739.6,780.6 1746.7,790.9 1752.7,801.5"/>
<path d="M1758.3,639 C1756,647.3 1753.2,655.7 1751.3,664 C1749.5,671.9 1748.6,679.7 1747.2,687.6"/>
<path d="M1765.2,639 C1771.7,648.3 1778.2,659.1 1784.7,666.8 C1789.8,672.9 1800.7,679.2 1799.9,682.1 C1799.4,684 1793.5,683.9 1790.2,684.8"/>
<path d="M1806.9,639 C1806,650.1 1806,664.6 1804.1,672.3 C1803,676.7 1801.3,678.8 1799.9,682.1"/>
<path d="M1645.8,744.6 C1644.9,746.4 1643.1,747.6 1643,750.1 C1642.7,755 1647.6,763.8 1651.3,772.3 C1656.7,784.7 1665.9,800.7 1673.6,816.8 C1682.5,835.5 1692.5,860.8 1701.3,877.9 C1708,890.9 1713.2,900.4 1720.8,911.2 C1728.8,922.7 1739.6,933.7 1748.6,944.6 C1757.1,954.9 1770.4,969.4 1773.6,975.1 C1774.6,977 1774.5,977.9 1774.9,979.3"/>
<path d="M1658.3,772.3 C1661.5,771.9 1663.8,770.3 1668,770.9 C1676.8,772.4 1693.5,783.5 1706.9,790.4 C1721.3,797.8 1737.1,806.1 1751.3,814 C1764.8,821.4 1778.9,830.9 1790.2,836.2 C1798.5,840.1 1805,841.8 1812.4,844.6"/>
<path d="M1741.6,814 C1741.1,816.8 1739.9,818.7 1740.2,822.3 C1740.9,829.4 1746,842.1 1751.3,852.9 C1758,866.7 1767.7,886 1779.1,897.3 C1789.4,907.5 1803.2,912.1 1815.2,919.6"/>
<path d="M1883.3,708.4 C1878.2,714.9 1873.4,719.8 1868,727.9 C1860.3,739.5 1851.2,756.1 1843,772.3 C1833.6,790.9 1824.2,813.6 1815.2,833.4 C1806.7,852.4 1798.6,870.5 1790.2,889 C1781.9,907.5 1772.9,924.2 1765.2,944.6 C1756.4,968.1 1749.3,997.4 1741.6,1022.3 C1734.5,1045.4 1727.7,1066.8 1720.8,1089"/>
<path d="M1847.2,772.3 C1837.4,778.8 1827.8,784.4 1818,791.8 C1807,800 1795.9,809.5 1784.7,819.6 C1772.3,830.6 1759.7,843.6 1747.2,855.7"/>
<path d="M1811.1,844.6 C1812.4,850.1 1814,854 1815.2,861.2 C1817.5,874.3 1818.8,897.6 1820.8,916.8 C1822.9,937.3 1825.4,959.4 1827.7,980.7"/>
<path d="M1780.5,891.8 C1781.4,896.4 1782.5,899.3 1783.3,905.7 C1784.9,919.6 1785.3,951.1 1786.1,972.3 C1786.7,991.7 1787.6,1008.9 1787.4,1027.9 C1787.2,1047.8 1785.6,1068.6 1784.7,1089"/>
<path d="M1676.3,861.2 C1676.8,879.7 1677.2,899.6 1677.7,916.8 C1678.2,931.7 1677.9,942.8 1679.1,958.4 C1680.7,978.7 1683.6,1005.6 1687.4,1027.9 C1691.1,1049 1696.7,1068.6 1701.3,1089"/>
<path d="M1668,904.3 C1662.4,917.7 1656.4,930.9 1651.3,944.6 C1646.2,958.2 1640.7,972.4 1637.4,986.2 C1634.4,999.3 1633.7,1012.1 1631.9,1025.1"/>
<path d="M1790.2,870.9 C1785.6,876 1781.3,879.6 1776.3,886.2 C1768.7,896.4 1757.8,916.1 1751.3,927.9 C1746.7,936.3 1743.9,942.7 1740.2,950.1"/>
<path d="M1747.2,925.1 C1741.1,930.7 1735.2,935.3 1729.1,941.8 C1721.8,949.6 1714.1,960.9 1706.9,969.6 C1700.3,977.5 1693.2,984.5 1687.4,991.8 C1682.2,998.3 1678.2,1004.7 1673.6,1011.2"/>
<path d="M1680.5,941.8 C1687.4,952 1693.7,962.6 1701.3,972.3 C1709,982.1 1719.7,990.4 1726.3,1000.1 C1732.4,1009 1737.5,1019.6 1740.2,1027.9 C1742.2,1034 1743.7,1039.7 1743,1044.6 C1742.4,1048.7 1739.3,1052 1737.4,1055.7"/>
<path d="M1673.6,1032.1 C1672.2,1039.9 1670.9,1047.1 1669.4,1055.7 C1667.6,1065.8 1665.7,1077.9 1663.8,1089"/>
<path d="M1856.9,1030.7 C1853.2,1039 1849.6,1046.7 1845.8,1055.7 C1841.3,1066 1836.5,1077.9 1831.9,1089"/>
<path d="M1848.6,1059.8 C1843.9,1062.1 1839.5,1063.3 1834.7,1066.8 C1827.7,1071.8 1819.9,1081.6 1812.4,1089"/>
<path d="M1502.7,1089 C1494.9,1101 1486.6,1112.5 1479.1,1125.1 C1471.3,1138.3 1462.3,1153.4 1456.9,1166.8 C1452.2,1178.3 1450.4,1189 1447.2,1200.1"/>
<path d="M1518,1089 C1510.6,1107.5 1503,1125.5 1495.8,1144.6 C1488.2,1164.4 1480.5,1185 1473.6,1205.7 C1466.6,1226.6 1459.8,1248.9 1454.1,1269.6 C1448.8,1288.7 1444.4,1306.5 1440.2,1325.1 C1436.1,1343.6 1431.9,1366.3 1429.1,1380.7 C1427.4,1389.7 1426.3,1395.5 1424.9,1402.9"/>
<path d="M1556.9,1089 C1556.9,1102.9 1557.6,1116.8 1556.9,1130.7 C1556.2,1144.6 1554.3,1158.1 1552.7,1172.3 C1551.1,1187.3 1549,1202.9 1547.2,1218.2"/>
<path d="M1488.8,1190.4 C1489.8,1191.8 1490.8,1192.2 1491.6,1194.6 C1494.5,1202.9 1495.8,1235.8 1497.2,1255.7 C1498.5,1274.6 1499.8,1294 1499.9,1311.2 C1500.1,1326.1 1499.6,1338.3 1498.6,1352.9 C1497.4,1369.1 1494.9,1387.1 1493,1404.3"/>
<path d="M1462.4,1247.3 C1459.7,1248.3 1457.1,1247.9 1454.1,1250.1 C1448.3,1254.4 1441.3,1268.2 1434.7,1277.9 C1427.4,1288.5 1418.6,1299.8 1412.4,1311.2 C1406.6,1322.1 1402.2,1332.4 1398.6,1344.6 C1394.5,1358.1 1393,1374.2 1390.2,1389"/>
<path d="M1583.3,1236.2 C1581,1237.1 1578.6,1236.8 1576.3,1239 C1571.4,1243.9 1566.8,1259.1 1562.4,1272.3 C1556.4,1290.6 1551.4,1317 1545.8,1339 C1540.3,1360.5 1534,1383.2 1529.1,1402.9 C1524.9,1419.8 1521.8,1434.9 1518,1450.1 C1514.4,1464.5 1510.1,1477.4 1506.9,1491.8 C1503.5,1507 1501.3,1523.3 1498.6,1539"/>
<path d="M1561.1,1280.7 C1554.1,1290.9 1546.5,1300.6 1540.2,1311.2 C1534,1321.9 1528.3,1333.6 1523.6,1344.6 C1519.1,1354.8 1516.1,1364.9 1512.4,1375.1"/>
<path d="M1548.6,1347.3 C1550.4,1352 1552.4,1355.1 1554.1,1361.2 C1557.2,1372.2 1560.6,1392.9 1562.4,1408.4 C1564.2,1423.4 1564.3,1438.1 1565.2,1452.9"/>
<path d="M1518,1412.6 C1512.4,1419.6 1506.7,1425.3 1501.3,1433.4 C1494.6,1443.6 1487,1458.3 1481.9,1469.6 C1477.7,1478.9 1475.4,1487.1 1472.2,1495.9"/>
<path d="M1522.2,1434.8 C1522.2,1439 1521.4,1442.3 1522.2,1447.3 C1523.4,1455.4 1529.3,1466.1 1531.9,1477.9 C1535.3,1493.5 1536.5,1514.9 1538.8,1533.4"/>
<path d="M1663.8,1089 L1662.4,1133.4"/>
<path d="M1662.4,1133.4 C1668,1132.1 1672.6,1129.7 1679.1,1129.3 C1688.3,1128.7 1700.6,1130.6 1712.4,1133.4 C1726.7,1136.9 1743,1144.6 1758.3,1150.1"/>
<path d="M1695.8,1089 L1706.9,1112.6"/>
<path d="M1724.9,1089 C1721.7,1100.1 1718.2,1112.4 1715.2,1122.3 C1712.8,1130.5 1710.6,1137.1 1708.3,1144.6"/>
<path d="M1783.3,1089 L1780.5,1120.9"/>
<path d="M1812.4,1089 C1806.9,1095.5 1800.4,1102 1795.8,1108.4 C1791.8,1114 1789.3,1119.6 1786.1,1125.1"/>
<path d="M1834.7,1089 C1829.1,1103.8 1823.4,1118.1 1818,1133.4 C1812.3,1149.6 1806.4,1166.7 1801.3,1183.4 C1796.3,1200 1792.2,1215.7 1787.4,1233.4 C1782.1,1253.4 1776,1276.8 1770.8,1297.3 C1765.9,1316.5 1760.6,1336.3 1756.9,1352.9 C1754,1366.2 1752.3,1377 1749.9,1389"/>
<path d="M1645.8,1111.2 C1651.3,1121.4 1656,1131.3 1662.4,1141.8 C1669.7,1153.5 1678.8,1165.7 1687.4,1177.9 C1696.4,1190.6 1705.8,1204.1 1715.2,1216.8 C1724.4,1229.1 1734.1,1242.1 1743,1252.9 C1750.7,1262.1 1759,1270.3 1765.2,1277.9 C1770.1,1283.9 1773.6,1289 1777.7,1294.6"/>
<path d="M1672.2,1159.8 C1679.1,1177 1685.9,1195.4 1693,1211.2 C1699.3,1225.2 1706.3,1239.8 1712.4,1250.1 C1716.8,1257.5 1720.8,1262.1 1724.9,1268.2"/>
<path d="M1772.2,1190.4 C1768,1198.3 1764.3,1205.9 1759.7,1214 C1754.6,1222.9 1748.3,1232.9 1743,1241.8 C1738.1,1250 1733.7,1257.5 1729.1,1265.4"/>
<path d="M1726.3,1215.4 C1734.7,1214.5 1742.4,1212.2 1751.3,1212.6 C1761.7,1213.1 1774.8,1215.5 1784.7,1219.6 C1793.6,1223.2 1800.4,1229.7 1808.3,1234.8"/>
<path d="M1827.7,1129.3 C1831,1135.3 1834.7,1139.9 1837.4,1147.3 C1841.2,1157.6 1843.9,1173.2 1845.8,1186.2 C1847.6,1199.1 1847.6,1212.1 1848.6,1225.1"/>
<path d="M1819.4,1152.9 C1821.7,1168.6 1824.7,1183.7 1826.3,1200.1 C1828.1,1217.8 1829.9,1238.8 1829.1,1255.7 C1828.5,1269.8 1825.4,1281.6 1823.6,1294.6"/>
<path d="M1731.9,1254.3 C1736.5,1254.7 1740.4,1254.6 1745.8,1255.7 C1753.5,1257.2 1764,1260.2 1773.6,1264 C1784.3,1268.3 1795.8,1274.9 1806.9,1280.7 C1818,1286.5 1829.1,1292.7 1840.2,1298.7"/>
<path d="M1744.4,1269.6 C1749.5,1275.1 1755,1280 1759.7,1286.2 C1764.7,1292.9 1768.5,1301.1 1773.6,1308.4 C1778.7,1316 1783.2,1324.3 1790.2,1330.7 C1797.8,1337.5 1808.8,1343.6 1818,1347.3 C1825.9,1350.6 1833.7,1351 1841.6,1352.9"/>
<path d="M1615.2,1215.4 C1618.9,1222.3 1621.9,1228.7 1626.3,1236.2 C1631.8,1245.5 1639.8,1256.2 1645.8,1266.8 C1651.8,1277.5 1657,1288.7 1662.4,1300.1 C1668.1,1311.9 1673,1323.6 1679.1,1336.2 C1685.9,1350.3 1694.2,1366.3 1701.3,1380.7 C1708,1394.1 1714.3,1406.6 1720.8,1419.6 C1727.3,1432.5 1733.7,1445.5 1740.2,1458.4"/>
<path d="M1640.2,1250.1 C1653.2,1255.7 1666.7,1261 1679.1,1266.8 C1690.7,1272.2 1702.2,1278 1712.4,1283.4 C1721.4,1288.2 1729.1,1292.7 1737.4,1297.3"/>
<path d="M1747.2,1302.9 C1744.9,1303.8 1742.4,1303.4 1740.2,1305.7 C1735,1311.1 1730.7,1330.5 1726.3,1344.6 C1721.3,1360.7 1712.5,1386.3 1712.4,1397.3 C1712.4,1402.4 1714.3,1404.7 1715.2,1408.4"/>
<path d="M1680.5,1312.6 C1689.3,1314.9 1698.4,1316.1 1706.9,1319.6 C1715.6,1323 1724.1,1328.2 1731.9,1333.4 C1739.4,1338.5 1745.8,1344.6 1752.7,1350.1"/>
<path d="M1658.3,1293.2 C1657.8,1308.4 1656.5,1322.2 1656.9,1339 C1657.4,1359.8 1659.7,1385.4 1662.4,1408.4 C1665.2,1431.6 1669,1459.1 1673.6,1477.9 C1676.8,1491.2 1680.2,1503.4 1684.7,1511.2 C1687.6,1516.3 1691.9,1522.4 1694.4,1522.3 C1696.1,1522.3 1697.2,1518.6 1698.6,1516.8"/>
<path d="M1702.7,1370.9 C1702.3,1373.3 1700.2,1375.4 1701.3,1377.9 C1703.9,1383.6 1723.8,1390.1 1734.7,1397.3 C1746,1404.9 1758,1412.4 1768,1422.3 C1778.5,1432.7 1786.8,1446.6 1795.8,1458.4 C1804.4,1469.8 1812.4,1480.7 1820.8,1491.8"/>
<path d="M1712.4,1423.7 C1714.3,1427.9 1715.7,1430.8 1718,1436.2 C1722.1,1446 1728.5,1462.7 1734.7,1477.9 C1742.1,1496.3 1751.3,1518.6 1759.7,1539"/>
<path d="M1715.2,1405.7 C1716.1,1420.5 1716.6,1432.8 1718,1450.1 C1719.9,1474.7 1723.6,1509.4 1726.3,1539"/>
</g>
<path fill="#588b7c" d="M975,705 C989.3,691.2 1001.9,674.9 1017.8,663.7 C1033.5,652.6 1050.3,645.8 1069.6,637.8 C1092.6,628.3 1119.4,619.7 1147.4,611.9 C1179.3,603 1216.3,593.9 1251.1,588.5 C1285.5,583.1 1324.3,579.5 1354.8,579.4 C1378.9,579.3 1399.6,581.2 1419.6,584.6 C1437.3,587.6 1452.5,593.3 1468.9,597.6 C1471.5,606.7 1474.9,614.5 1476.7,624.8 C1478.9,637.6 1479.9,655.2 1479.3,668.9 C1478.7,680.9 1476.5,691 1474.1,702.6 C1471.5,715.2 1468.3,729.5 1463.7,741.5 C1459.5,752.7 1454.8,767.3 1448.2,772.6 C1443.7,776.2 1439.6,775.3 1432.6,776.5 C1418.4,779 1392.6,782.2 1367.8,783 C1334.6,784.1 1288.9,780.3 1251.1,779 C1215.5,777.7 1182,776.9 1147.4,775.2 C1112.8,773.5 1072.6,770.3 1043.7,768.7 C1022.9,767.5 1007.9,766.9 990,766 L975,705 Z"/>
<path fill="#68947f" d="M740.7,587.4 C747.1,587.7 752.3,586.9 760,588.4 C772.6,590.8 790.5,598 808,605 C830.2,613.9 857.3,626.2 882,639 C908,652.4 940.5,670.7 960,684 C972.8,692.7 980.4,699.3 990,708 C999.8,716.9 1009.1,727 1018,737 C1026.8,747 1034.7,757.7 1043,768 C1014,766.7 988.8,765 956,764 C913.2,762.7 851.6,762.5 808,762 C773.4,761.6 746,761.3 715,761 C718.1,757.7 721.7,754.4 724.4,751.1 C726.8,748.2 728.9,745.7 730.4,742.2 C732.1,738 733.4,732.2 733.3,727.4 C733.3,722.8 732.4,717.8 730.4,714.1 C728.4,710.5 724.4,707.8 721.5,705.2 C719,703 715,701.1 714.1,699.3 C713.6,698.3 713.5,697.3 714.1,696.3 C715.5,694.2 723.8,692.9 727.4,690.4 C730.5,688.3 733.1,686 734.8,683 C736.7,679.7 737.6,675 737.8,671.1 C738,667.5 737.4,664.5 736.3,660.7 C734.9,655.5 732.5,647.8 728.9,643 C725.5,638.5 718.3,635.9 715.6,632.6 C713.9,630.6 713.8,628.6 712.6,626.7 C711.3,624.7 708.1,623.2 708.1,620.7 C708,616.9 714.7,610.5 718.5,606 C722.2,601.6 726.4,597.2 730.4,594 C733.8,591.2 737.3,589.6 740.7,587.4 Z"/>
<path fill="#749b88" d="M716,761 C746.7,761.3 773.5,761.2 808,762 C852.6,763 956.3,762.1 961,767 C961.5,767.5 961,768.1 961,768.6 C934.7,771.4 907.6,771.1 882,777 C856.6,782.9 829.4,792.3 808,804 C789,814.4 770.7,828.3 758.8,841.5 C749.5,851.8 742.8,864.8 739,873.6 C736.6,879.1 736.3,883.2 735,888 C735.5,879 737.4,868.9 736.5,861 C735.8,854.6 734.2,849 731.6,844 C729.2,839.3 723,836 721.7,831.6 C720.5,827.6 721.1,822.5 723,819 C725,815.4 731.1,814.5 734,810.6 C737.5,805.9 741.3,797.9 741.5,792 C741.6,786.8 738.2,782.1 736.5,777.3 C734.9,772.6 734.9,766.2 731.6,763.5 C728.2,760.7 721.2,761.8 716,761 Z"/>
<path fill="#86a48b" d="M118,939 L707,939 C707.7,926.2 705.6,908.3 709,900.7 C710.8,896.6 713.4,895 716.8,893 C721.2,890.4 728.3,889.7 734,888 C736.5,896.3 737.4,905.5 741.5,913 C745.6,920.5 751.6,927.2 758.8,932.8 C766.9,939.1 778.3,943.9 788.4,947.7 C798.3,951.4 807.9,952 818.9,955.7 C832.4,960.2 849.8,969.1 863,973.9 C873.4,977.7 880.4,979.1 891.5,983 C907.3,988.6 931.2,999.4 948.5,1005 C962.6,1009.6 973.4,1012.2 987.4,1015.4 C1003.4,1019.1 1021.4,1022.2 1039.3,1025.7 C1058.5,1029.5 1083.2,1033.5 1098.9,1037.4 C1109.4,1040 1116.6,1041.7 1124.8,1045.2 C1133,1048.6 1141.4,1052.2 1148.2,1058 C1155.4,1064.1 1162.4,1073.8 1166.3,1081.5 C1169.4,1087.6 1171.5,1093.6 1171.5,1099.6 C1171.5,1105.7 1169.4,1111 1166.3,1117.8 C1161.6,1128.1 1152.5,1144.3 1143,1154 C1134.1,1163 1122.5,1167.6 1111.9,1174.8 C1100.8,1182.3 1090.6,1189.9 1078,1198 C1062.7,1207.9 1043.1,1218.1 1026.3,1229.3 C1009.4,1240.6 987.9,1256.4 977,1265.6 C971.1,1270.5 967.4,1274 964.2,1277.9 C961.7,1280.9 960,1283.4 958.6,1286.5 C957.1,1289.7 956,1293.9 955.6,1297 C955.3,1299.3 955.4,1301.2 955.6,1303.2 C955.8,1305.1 957.2,1307.3 956.8,1308.8 C956.5,1310.1 955.1,1310.9 954.3,1312 L940,1340 L700,1539 L118,1539 Z"/>
<rect x="118" y="938" width="590" height="4" fill="#749b88"/>
<path fill="#adbd8e" d="M118,1137.4 C129.7,1134.1 140.1,1129.8 153,1127.4 C168.4,1124.6 185.7,1122.7 204.7,1123 C227.9,1123.3 255.9,1126.7 282.2,1131.7 C310.3,1137 339.9,1145.2 368.3,1154.6 C397.3,1164.2 425.8,1175.3 454.4,1189 C484.7,1203.5 519.2,1222.4 545,1240 C566.3,1254.6 584.5,1270 600,1285 C613,1297.6 621.7,1307.6 633,1323 C648.1,1343.7 666.6,1369.5 680,1400 C697,1438.6 706.7,1492.7 720,1539 L118,1539 Z"/>
<path fill="#bdc69a" d="M373.2,1539 C375.5,1533.7 376.9,1529.3 380,1523.2 C384.7,1514.1 393,1500.3 400,1490.4 C406.4,1481.4 413.2,1473.4 420,1465.7 C426.5,1458.3 433.2,1451.5 440,1444.9 C446.6,1438.5 453.2,1432.5 460,1426.7 C466.6,1421 473.3,1415.7 480,1410.5 C486.6,1405.4 493.3,1400.5 500,1395.7 C506.6,1391 513.3,1386.5 520,1382.2 C526.6,1377.9 533.3,1373.8 540,1369.8 C546.6,1365.8 553.3,1362 560,1358.3 C566.6,1354.6 573.3,1351.1 580,1347.7 C586.6,1344.3 593.3,1341.1 600,1338 C606.6,1334.9 613.3,1331.9 620,1329 C626.6,1326.1 633.3,1323.3 640,1320.7 C646.6,1318.1 653.3,1315.6 660,1313.2 C666.6,1310.8 673.3,1308.6 680,1306.4 C686.6,1304.3 693.3,1302.2 700,1300.3 C706.6,1298.4 713.3,1296.7 720,1295 C726.7,1293.3 733.3,1291.7 740,1290.3 C746.7,1288.9 753.3,1287.6 760,1286.5 C766.7,1285.4 773.3,1284.4 780,1283.5 C786.7,1282.6 793.3,1281.9 800,1281.3 C806.7,1280.8 813.3,1280.4 820,1280.2 C826.7,1280 833.3,1279.9 840,1280.1 C846.7,1280.3 853.3,1280.7 860,1281.3 C866.7,1281.9 873.4,1282.7 880,1283.9 C886.7,1285.1 893.4,1286.6 900,1288.5 C906.7,1290.5 913.7,1292.9 920,1295.7 C926,1298.4 931.3,1301.7 937,1304.9 C942.8,1308.1 948.5,1311.6 954.3,1315 C953.9,1316.2 953.3,1317 953.1,1318.6 C952.7,1321.5 952.8,1326.9 953.7,1331 C954.6,1335.2 956.5,1339 958.6,1343.3 C961.1,1348.5 964.2,1354.6 967.9,1360 C971.9,1365.7 976.4,1370.5 982,1376.4 C989.3,1384 1000.6,1393.9 1008.7,1401.2 C1015.4,1407.2 1021,1410.8 1027.2,1417.4 C1034.9,1425.6 1045,1436.5 1050.4,1447.5 C1055.7,1458.2 1057,1471.2 1059.6,1482.2 C1061.9,1491.9 1065,1500.6 1065.4,1510 C1065.8,1519.5 1063.1,1529.3 1062,1539 L374,1539 Z"/>
<circle cx="1031" cy="476.5" r="70.5" fill="none" stroke="#cdced2" stroke-width="4"/>
<path fill="#ead08a" d="M1032.3,407.8 C1043.5,407.6 1056.1,408.9 1065.9,414.1 C1076.2,419.5 1085.9,429.7 1092.2,440.4 C1098.9,451.8 1103.1,468.2 1103.7,481.3 C1104.3,493.2 1102.2,506.1 1097.4,515.9 C1092.8,525.1 1085.5,533.5 1076.4,539 C1065.9,545.4 1048.5,548.6 1036.5,549.5 C1026.8,550.2 1017.6,548.6 1010,546.5 C1003.8,544.8 998.4,542.4 994,539 C989.9,535.8 987.4,531.6 984,527 C979.9,521.4 974.6,515.2 971.5,507.5 C967.8,498.1 964.8,485.3 965.2,473.9 C965.6,461.9 968.6,447.2 974.6,437.2 C980.2,427.9 989.3,420.1 998.8,415.2 C1008.5,410.2 1021.1,408 1032.3,407.8 Z"/>
</g>
<defs><clipPath id="cv"><rect x="118" y="189" width="1800" height="1350"/></clipPath></defs>
</svg>
</body></html>
